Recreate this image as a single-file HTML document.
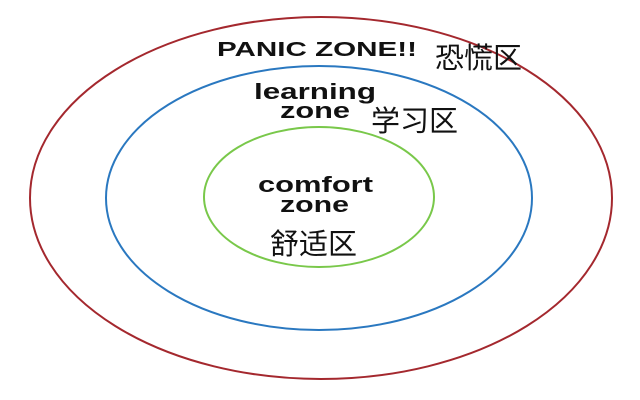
<!DOCTYPE html>
<html><head><meta charset="utf-8"><style>html,body{margin:0;padding:0;background:#fff;width:640px;height:400px;overflow:hidden}</style></head>
<body>
<svg width="640" height="400" viewBox="0 0 640 400" xmlns="http://www.w3.org/2000/svg">
<rect width="640" height="400" fill="#fff"/>
<ellipse cx="321" cy="198" rx="291" ry="181" fill="none" stroke="#a4282e" stroke-width="2"/>
<ellipse cx="319" cy="198" rx="213" ry="132" fill="none" stroke="#2a78c0" stroke-width="2"/>
<ellipse cx="319" cy="197" rx="115" ry="70" fill="none" stroke="#79c84a" stroke-width="2"/>
<g font-family="Liberation Sans, sans-serif" font-weight="bold" fill="#111">
<text x="217" y="56" font-size="20" textLength="200" lengthAdjust="spacingAndGlyphs">PANIC ZONE!!</text>
<text x="254" y="99" font-size="22" textLength="122" lengthAdjust="spacingAndGlyphs">learning</text>
<text x="280" y="118" font-size="22" textLength="70" lengthAdjust="spacingAndGlyphs">zone</text>
<text x="258" y="192" font-size="22" textLength="115" lengthAdjust="spacingAndGlyphs">comfort</text>
<text x="280" y="212" font-size="22" textLength="69" lengthAdjust="spacingAndGlyphs">zone</text>
</g>
<g font-family="Noto Sans CJK SC, WenQuanYi Zen Hei, sans-serif" font-size="29" fill="#111" font-weight="400">
<text x="435" y="68">恐慌区</text>
<text x="371" y="131">学习区</text>
<text x="270" y="254">舒适区</text>
</g>
</svg>
</body></html>
